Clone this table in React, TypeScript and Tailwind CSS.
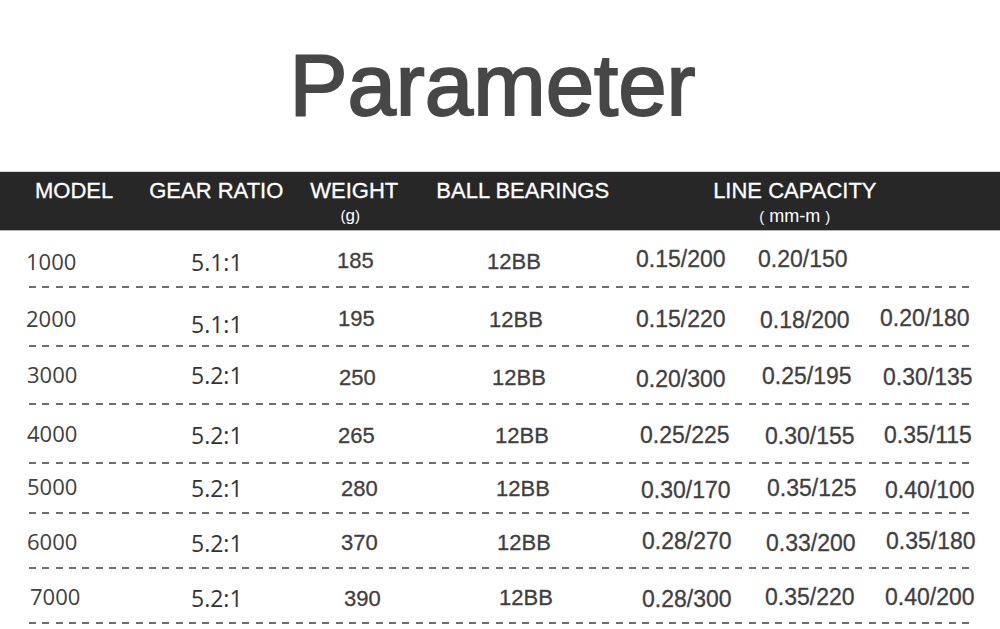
const sans = "font-['Liberation_Sans',Arial,sans-serif]";
const open = "font-['Open_Sans',sans-serif]";
const arialCell = `${sans} text-[#3f3f3f] [-webkit-text-stroke:0.3px_#3f3f3f]`;

// column box + font per column
const cols = [
  `w-[180px] ${open} text-[22px] text-[#404040]`,
  `w-[140px] ${open} text-[23px] text-[#333333]`,
  `w-[150px] text-[22px] ${arialCell}`,
  `w-[150px] text-[22px] ${arialCell}`,
  `w-[125px] text-[23px] ${arialCell}`,
  `w-[125px] text-[23px] ${arialCell}`,
  `w-[130px] text-[23px] ${arialCell}`,
];

type Row = { h: string; cells: Array<[string, string]> };

const rows: Row[] = [
  {
    h: 'h-[55px]',
    cells: [
      ['1000', 'pl-[26px] pt-[18px]'],
      ['5.1:1', 'pl-[11px] pt-[19px]'],
      ['185', 'pl-[17px] pt-[18px]'],
      ['12BB', 'pl-[17px] pt-[19px]'],
      ['0.15/200', 'pl-[16px] pt-[16px]'],
      ['0.20/150', 'pl-[13px] pt-[16px]'],
      ['', ''],
    ],
  },
  {
    h: 'h-[57px]',
    cells: [
      ['2000', 'pl-[26px] pt-[18px]'],
      ['5.1:1', 'pl-[11px] pt-[24px]'],
      ['195', 'pl-[18px] pt-[19px]'],
      ['12BB', 'pl-[19px] pt-[20px]'],
      ['0.15/220', 'pl-[16px] pt-[19px]'],
      ['0.18/200', 'pl-[15px] pt-[20px]'],
      ['0.20/180', 'pl-[10px] pt-[18px]'],
    ],
  },
  {
    h: 'h-[56px]',
    cells: [
      ['3000', 'pl-[27px] pt-[15px]'],
      ['5.2:1', 'pl-[11px] pt-[16px]'],
      ['250', 'pl-[19px] pt-[19px]'],
      ['12BB', 'pl-[22px] pt-[19px]'],
      ['0.20/300', 'pl-[16px] pt-[20px]'],
      ['0.25/195', 'pl-[17px] pt-[17px]'],
      ['0.30/135', 'pl-[13px] pt-[18px]'],
    ],
  },
  {
    h: 'h-[57px]',
    cells: [
      ['4000', 'pl-[27px] pt-[16px]'],
      ['5.2:1', 'pl-[11px] pt-[18px]'],
      ['265', 'pl-[18px] pt-[19px]'],
      ['12BB', 'pl-[25px] pt-[19px]'],
      ['0.25/225', 'pl-[20px] pt-[18px]'],
      ['0.30/155', 'pl-[20px] pt-[19px]'],
      ['0.35/115', 'pl-[14px] pt-[18px]'],
    ],
  },
  {
    h: 'h-[48px]',
    cells: [
      ['5000', 'pl-[27px] pt-[10px]'],
      ['5.2:1', 'pl-[11px] pt-[12px]'],
      ['280', 'pl-[21px] pt-[13px]'],
      ['12BB', 'pl-[26px] pt-[13px]'],
      ['0.30/170', 'pl-[21px] pt-[14px]'],
      ['0.35/125', 'pl-[22px] pt-[12px]'],
      ['0.40/100', 'pl-[15px] pt-[14px]'],
    ],
  },
  {
    h: 'h-[53px]',
    cells: [
      ['6000', 'pl-[27px] pt-[15px]'],
      ['5.2:1', 'pl-[11px] pt-[17px]'],
      ['370', 'pl-[21px] pt-[17px]'],
      ['12BB', 'pl-[27px] pt-[17px]'],
      ['0.28/270', 'pl-[22px] pt-[15px]'],
      ['0.33/200', 'pl-[21px] pt-[17px]'],
      ['0.35/180', 'pl-[16px] pt-[15px]'],
    ],
  },
  {
    h: 'h-[53px]',
    cells: [
      ['7000', 'pl-[30px] pt-[15px]'],
      ['5.2:1', 'pl-[11px] pt-[17px]'],
      ['390', 'pl-[24px] pt-[18px]'],
      ['12BB', 'pl-[29px] pt-[17px]'],
      ['0.28/300', 'pl-[22px] pt-[18px]'],
      ['0.35/220', 'pl-[20px] pt-[16px]'],
      ['0.40/200', 'pl-[15px] pt-[16px]'],
    ],
  },
];

function Dashes() {
  return (
    <div className="ml-[29px] h-[2px] w-[942px] bg-[repeating-linear-gradient(90deg,#6e6e6e_0px,#6e6e6e_7px,transparent_7px,transparent_13.33px)]" />
  );
}

export default function App() {
  return (
    <div className="h-[629px] w-[1000px] overflow-hidden bg-white">
      {/* title */}
      <div className={`h-[171px] pt-[41px] pr-[15px] text-center text-[87px] leading-[87px] text-[#474747] [-webkit-text-stroke:2px_#474747] ${sans}`}>
        Parameter
      </div>

      {/* header bar */}
      <div className={`flex h-[60px] items-start border-t border-b border-t-[#d2d2d2] border-b-[#b5b5b5] bg-[#272727] pt-[6px] text-[22px] leading-[26px] text-white ${sans}`}>
        <div className="ml-[35px] [-webkit-text-stroke:0.3px_#ffffff]">MODEL</div>
        <div className="ml-[36px] [-webkit-text-stroke:0.3px_#ffffff]">GEAR RATIO</div>
        <div className="ml-[27px] flex flex-col items-center">
          <span className="[-webkit-text-stroke:0.3px_#ffffff]">WEIGHT</span>
          <span className="mt-[3px] mr-[8px] flex items-baseline leading-[18px]">
            <span className="text-[15px]">(</span>
            <span className="text-[17px]">g</span>
            <span className="text-[15px]">)</span>
          </span>
        </div>
        <div className="ml-[38px] [-webkit-text-stroke:0.3px_#ffffff]">BALL BEARINGS</div>
        <div className="ml-[104px] flex flex-col items-center">
          <span className="[-webkit-text-stroke:0.3px_#ffffff]">LINE CAPACITY</span>
          <span className="mt-[3px] flex items-baseline leading-[18px]">
            <span className="text-[15px]">(</span>
            <span className="mx-[5px] text-[18px]">mm-m</span>
            <span className="text-[15px]">)</span>
          </span>
        </div>
      </div>

      {/* rows */}
      {rows.map((row, i) => (
        <div key={i}>
          <div className={`flex items-start ${row.h}`}>
            {row.cells.map(([t, cls], j) => (
              <div key={j} className={`${cols[j]} ${cls} leading-[24px] whitespace-nowrap`}>
                {t}
              </div>
            ))}
          </div>
          <Dashes />
        </div>
      ))}
    </div>
  );
}
